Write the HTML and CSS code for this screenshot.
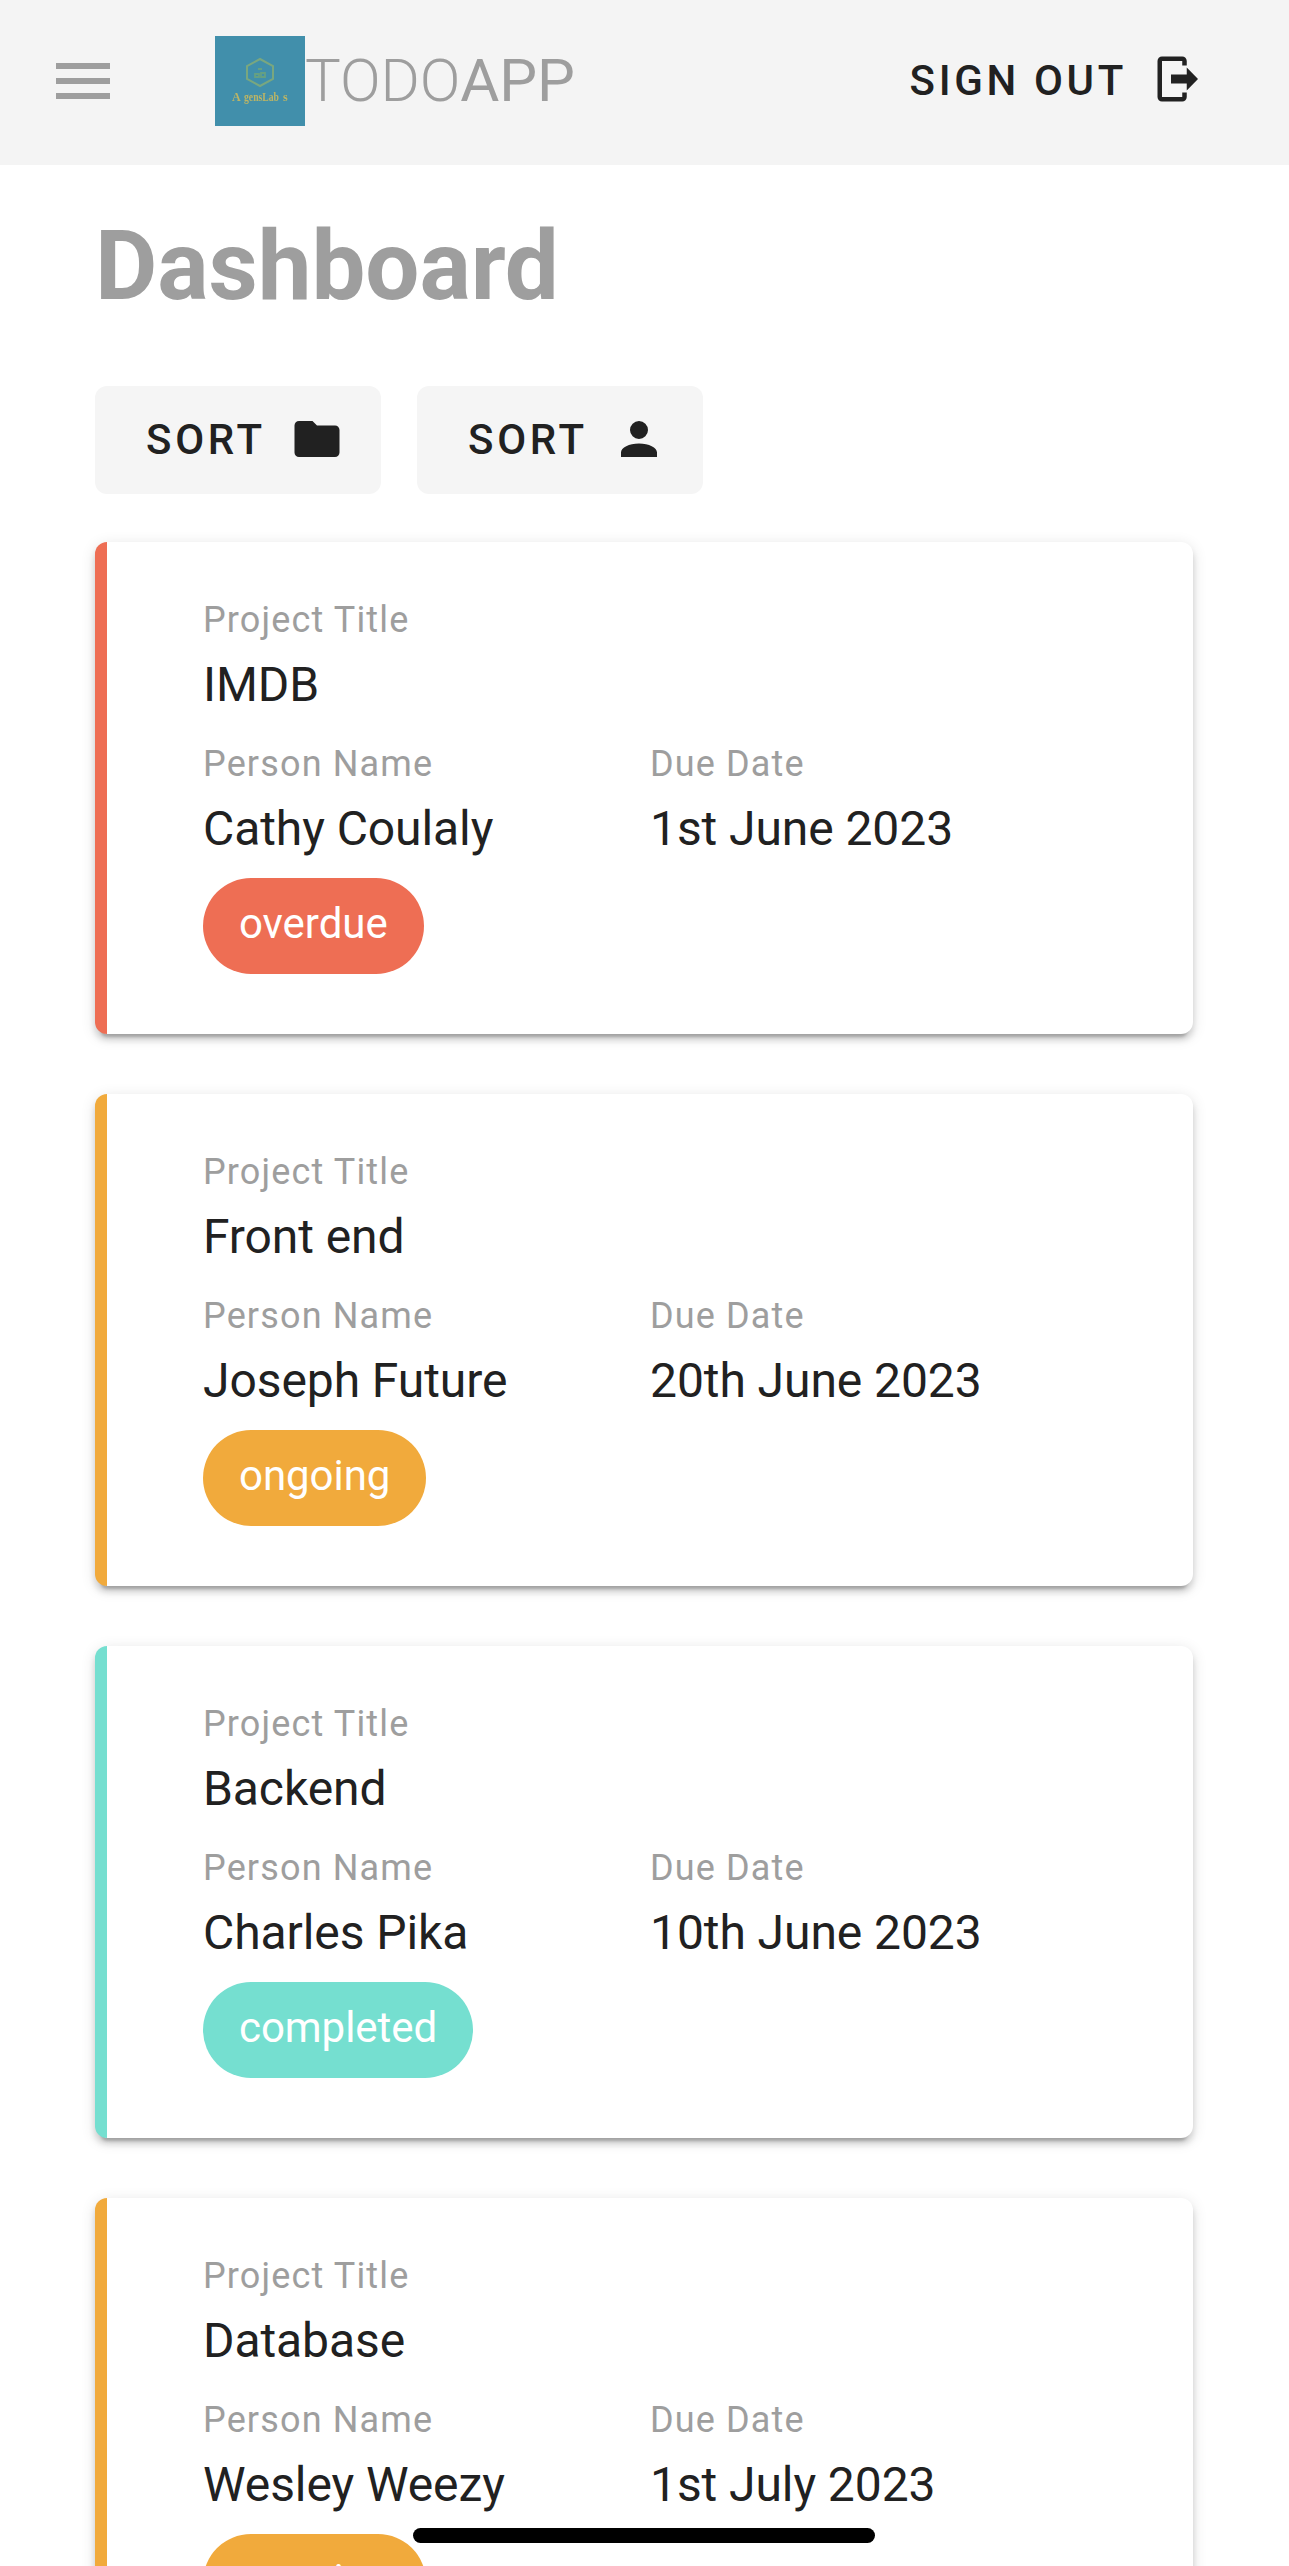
FILE: index.html
```html
<!DOCTYPE html>
<html lang="en">
<head>
<meta charset="utf-8">
<title>TodoApp</title>
<link rel="stylesheet" href="styles.css">
</head>
<body>
<header class="bar">
  <svg class="menu" viewBox="0 0 24 24"><path d="M3,6H21V8H3V6M3,11H21V13H3V11M3,16H21V18H3V16Z"/></svg>
  <svg class="logo" viewBox="0 0 90 90">
    <rect width="90" height="90" fill="#418fab"/>
    <g class="logo-art">
      <path d="M45 23L58 30V43L45 50L32 43V30Z" fill="none" stroke="#79a77f" stroke-width="2"/>
      <path d="M43 33h4M40 41v-3h4v3zM46 41v-4h4v4z" fill="none" stroke="#65a083" stroke-width="1.8"/>
      <text class="logo-text" x="17" y="65">A</text>
      <text class="logo-text" x="29" y="65" textLength="35" lengthAdjust="spacingAndGlyphs">gensLab</text>
      <text class="logo-text" x="68" y="65">s</text>
    </g>
  </svg>
  <div class="brand">TODO<span>APP</span></div>
  <div class="signout">SIGN OUT
    <svg class="icon" viewBox="0 0 24 24"><path d="M15 17.1V14H8V10H15V6.9L20 12L15 17.1M4 2H13C14.1 2 15 2.9 15 4V6H13V4H4V20H13V18H15V20C15 21.1 14.1 22 13 22H4C2.9 22 2 21.1 2 20V4C2 2.9 2.9 2 4 2Z"/></svg>
  </div>
</header>
<main class="page">
  <h1>Dashboard</h1>
  <div class="sorts">
    <button class="sort">SORT<svg class="icon" viewBox="0 0 24 24"><path d="M10,4H4C2.89,4 2,4.89 2,6V18A2,2 0 0,0 4,20H20A2,2 0 0,0 22,18V8C22,6.89 21.1,6 20,6H12L10,4Z"/></svg></button>
    <button class="sort">SORT<svg class="icon" viewBox="0 0 24 24"><path d="M12,4A4,4 0 0,1 16,8A4,4 0 0,1 12,12A4,4 0 0,1 8,8A4,4 0 0,1 12,4M12,14C16.42,14 20,15.79 20,18V20H4V18C4,15.79 7.58,14 12,14Z"/></svg></button>
  </div>
  <section class="card overdue">
    <div class="field wide"><small>Project Title</small><p>IMDB</p></div>
    <div class="field"><small>Person Name</small><p>Cathy Coulaly</p></div>
    <div class="field"><small>Due Date</small><p>1st June 2023</p></div>
    <span class="chip">overdue</span>
  </section>
  <section class="card ongoing">
    <div class="field wide"><small>Project Title</small><p>Front end</p></div>
    <div class="field"><small>Person Name</small><p>Joseph Future</p></div>
    <div class="field"><small>Due Date</small><p>20th June 2023</p></div>
    <span class="chip">ongoing</span>
  </section>
  <section class="card completed">
    <div class="field wide"><small>Project Title</small><p>Backend</p></div>
    <div class="field"><small>Person Name</small><p>Charles Pika</p></div>
    <div class="field"><small>Due Date</small><p>10th June 2023</p></div>
    <span class="chip">completed</span>
  </section>
  <section class="card ongoing">
    <div class="field wide"><small>Project Title</small><p>Database</p></div>
    <div class="field"><small>Person Name</small><p>Wesley Weezy</p></div>
    <div class="field"><small>Due Date</small><p>1st July 2023</p></div>
    <span class="chip">ongoing</span>
  </section>
</main>
<div class="home"></div>
</body>
</html>
```
FILE: styles.css
```css
* { box-sizing: border-box; }
html, body { height: 2566px; overflow: hidden; }
body { margin: 0; background: #fff; color: #212121; font-family: Roboto, sans-serif; }
svg { display: block; flex: none; fill: currentColor; }

.bar { height: 165px; padding: 36px 82px 0 47px; display: flex; align-items: flex-start; background: #f4f4f4; }
.menu { width: 72px; height: 72px; margin: 9px 96px 0 0; color: #9e9e9e; }
.logo { width: 90px; height: 90px; }
.logo-art { filter: blur(0.6px); }
.logo-text { font: 700 12px "Liberation Serif", serif; fill: #bcb565; }
.brand { margin-top: 9px; color: #9e9e9e; font-size: 60px; font-weight: 300; line-height: 72px; letter-spacing: -0.1px; }
.brand span { font-weight: 400; }
.signout { margin: 15px 0 0 auto; display: flex; align-items: center; font-size: 42px; font-weight: 500; letter-spacing: 3.65px; line-height: 60px; }
.icon { width: 54px; height: 54px; margin-left: 26px; position: relative; top: -2px; }

.page { padding: 0 95px; }
h1 { margin: 53px 0 0; height: 168px; color: #9e9e9e; font-size: 96px; font-weight: 700; line-height: 96px; letter-spacing: -0.1px; }
.sorts { display: flex; gap: 36px; margin-bottom: 48px; }
.sort { display: flex; align-items: center; width: 286px; height: 108px; padding: 0 0 1px 51px; border: 0; border-radius: 12px; background: #f5f5f5; color: #212121; font: 500 42px Roboto, sans-serif; letter-spacing: 3.7px; }
.sort .icon { margin-left: 24px; top: -1px; }

.card { display: grid; grid-template-columns: 447px 1fr; align-content: start; justify-items: start; width: 1098px; height: 492px; margin-bottom: 60px; padding: 48px 0 0 96px; border-left: 12px solid; border-radius: 12px; background: #fff; box-shadow: 0 9px 3px -6px rgba(0,0,0,.2), 0 6px 6px 0 rgba(0,0,0,.14), 0 3px 15px 0 rgba(0,0,0,.12); }
.wide { grid-column: 1 / -1; }
.field { height: 144px; }
.field small { display: block; color: #9e9e9e; font-size: 36px; letter-spacing: 1.15px; line-height: 60px; }
.field p { margin: 0; color: #212121; font-size: 48px; line-height: 70px; letter-spacing: -0.08px; white-space: nowrap; }
.chip { height: 96px; padding: 0 36px; border-radius: 48px; color: #fff; font-size: 42px; line-height: 92px; letter-spacing: -0.05px; }
.overdue { border-color: #ee6e54; }
.overdue .chip { background: #ee6e54; }
.ongoing { border-color: #f1aa3c; }
.ongoing .chip { background: #f1aa3c; }
.completed { border-color: #75dfd0; }
.completed .chip { background: #75dfd0; }

.home { position: fixed; left: 413px; top: 2528px; width: 462px; height: 15px; border-radius: 8px; background: #000; }
```
